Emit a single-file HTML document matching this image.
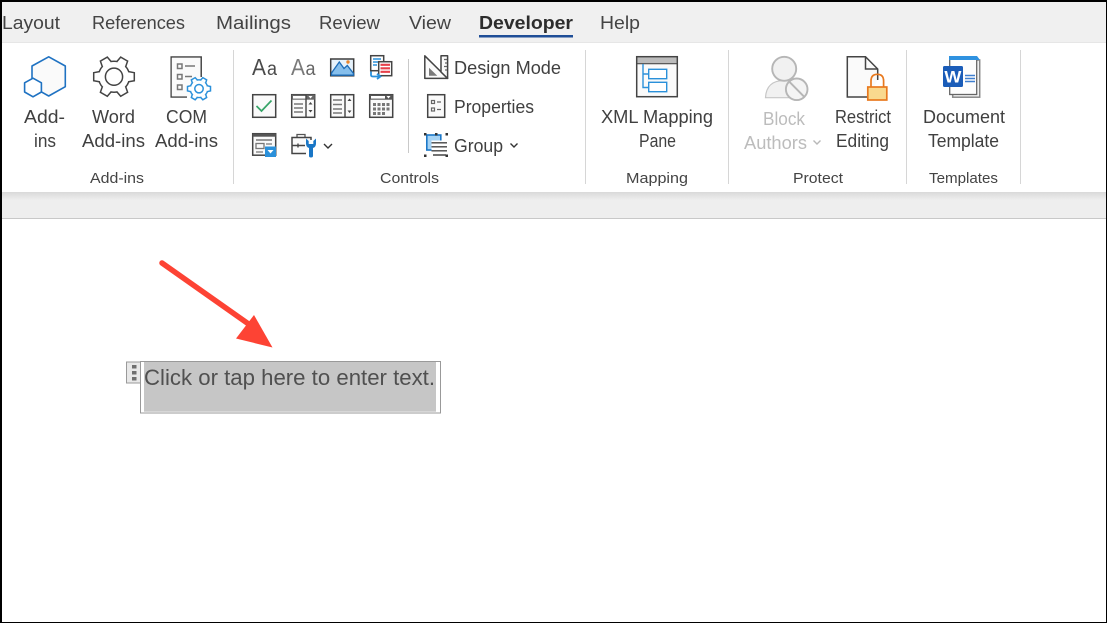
<!DOCTYPE html>
<html><head><meta charset="utf-8"><style>
html,body{margin:0;padding:0;background:#fff;width:1107px;height:623px;overflow:hidden}
svg{display:block}
text{font-family:"Liberation Sans",sans-serif;fill:#3a3a3a}
.t{font-size:18px;fill:#444}
.l{font-size:18px;fill:#404040}
.g{font-size:15px;fill:#444}
.d{fill:#bcbcbc}
</style></head><body>
<svg width="1107" height="623" viewBox="0 0 1107 623" xmlns="http://www.w3.org/2000/svg">
<defs><linearGradient id="sh" x1="0" y1="0" x2="0" y2="1"><stop offset="0" stop-color="#d9d9d9"/><stop offset="1" stop-color="#eeeeee"/></linearGradient></defs>
<rect width="1107" height="623" fill="#fff"/>
<rect y="0" width="1107" height="43" fill="#f0f0f0"/>
<rect y="42" width="1107" height="1" fill="#e6e6e6"/>
<rect y="192" width="1107" height="8" fill="url(#sh)"/>
<rect y="200" width="1107" height="18" fill="#eeeeee"/>
<rect y="218" width="1107" height="1" fill="#c8c8c8"/>

<!-- tabs -->
<g class="tabs">
<text class="t" x="2" y="29" textLength="58" lengthAdjust="spacingAndGlyphs">Layout</text>
<text class="t" x="92" y="29" textLength="93" lengthAdjust="spacingAndGlyphs">References</text>
<text class="t" x="216" y="29" textLength="75" lengthAdjust="spacingAndGlyphs">Mailings</text>
<text class="t" x="319" y="29" textLength="61" lengthAdjust="spacingAndGlyphs">Review</text>
<text class="t" x="409" y="29" textLength="42" lengthAdjust="spacingAndGlyphs">View</text>
<text class="t" x="479" y="29" textLength="94" lengthAdjust="spacingAndGlyphs" style="font-weight:bold;fill:#2d2d2d">Developer</text>
<text class="t" x="600" y="29" textLength="40" lengthAdjust="spacingAndGlyphs">Help</text>
</g>
<rect x="479" y="35" width="94" height="2.5" fill="#1f4e97"/>

<!-- separators -->
<g fill="#d6d6d6">
<rect x="233" y="50" width="1" height="134"/>
<rect x="585" y="50" width="1" height="134"/>
<rect x="728" y="50" width="1" height="134"/>
<rect x="906" y="50" width="1" height="134"/>
<rect x="1020" y="50" width="1" height="134"/>
<rect x="408" y="59" width="1" height="94" fill="#c9c9c9"/>
</g>

<!-- Add-ins icon -->
<path d="M48.7 56.8 65.3 66V86.7L48.7 96 41 91.7V83L33 78.5 32 79V66Z" fill="#fafafa" stroke="#1f72c2" stroke-width="1.6" stroke-linejoin="round"/>
<path d="M33 78.2 41.4 82.8V92L33 96.8 24.6 92V82.8Z" fill="#fff" stroke="#1f72c2" stroke-width="1.6" stroke-linejoin="round"/>

<!-- Word add-ins gear -->
<g transform="translate(114 76.7)" fill="#fff" stroke="#444" stroke-width="1.5">
<circle r="15.5"/>
<path d="M-5.2 -14 -4 -20.3H4L5.2 -14" transform="rotate(30)"/>
<path d="M-5.2 -14 -4 -20.3H4L5.2 -14" transform="rotate(90)"/>
<path d="M-5.2 -14 -4 -20.3H4L5.2 -14" transform="rotate(150)"/>
<path d="M-5.2 -14 -4 -20.3H4L5.2 -14" transform="rotate(210)"/>
<path d="M-5.2 -14 -4 -20.3H4L5.2 -14" transform="rotate(270)"/>
<path d="M-5.2 -14 -4 -20.3H4L5.2 -14" transform="rotate(330)"/>
<circle r="14.6" stroke="none"/>
<circle r="8.6"/>
</g>

<!-- COM add-ins -->
<path d="M187 97H171.2V57H201.2V77" fill="#fafafa" stroke="#444" stroke-width="1.5"/>
<rect x="171.8" y="57.8" width="28.6" height="38.5" fill="#fafafa"/>
<g fill="none" stroke="#777" stroke-width="1.5">
<rect x="177.5" y="64" width="4.5" height="4.5"/><rect x="177.5" y="74.5" width="4.5" height="4.5"/><rect x="177.5" y="85" width="4.5" height="4.5"/>
<path d="M185 66H195M185 76.5H192"/>
</g>
<g transform="translate(199 88.7)" fill="#fff" stroke="#2a90da" stroke-width="1.5">
<circle r="8.8"/>
<path d="M-3 -8 -2.2 -11.5H2.2L3 -8" transform="rotate(30)"/>
<path d="M-3 -8 -2.2 -11.5H2.2L3 -8" transform="rotate(90)"/>
<path d="M-3 -8 -2.2 -11.5H2.2L3 -8" transform="rotate(150)"/>
<path d="M-3 -8 -2.2 -11.5H2.2L3 -8" transform="rotate(210)"/>
<path d="M-3 -8 -2.2 -11.5H2.2L3 -8" transform="rotate(270)"/>
<path d="M-3 -8 -2.2 -11.5H2.2L3 -8" transform="rotate(330)"/>
<circle r="8" stroke="none"/>
<circle r="4.2"/>
</g>

<!-- Add-ins labels -->
<text class="l" x="24" y="123" textLength="41" lengthAdjust="spacingAndGlyphs">Add-</text>
<text class="l" x="34" y="147" textLength="22" lengthAdjust="spacingAndGlyphs">ins</text>
<text class="l" x="92" y="123" textLength="43" lengthAdjust="spacingAndGlyphs">Word</text>
<text class="l" x="82" y="147" textLength="63" lengthAdjust="spacingAndGlyphs">Add-ins</text>
<text class="l" x="166" y="123" textLength="41" lengthAdjust="spacingAndGlyphs">COM</text>
<text class="l" x="155" y="147" textLength="63" lengthAdjust="spacingAndGlyphs">Add-ins</text>
<text class="g" x="90" y="183" textLength="54" lengthAdjust="spacingAndGlyphs">Add-ins</text>

<!-- Controls row 1 -->
<text x="252" y="75" style="font-size:23px;fill:#4a4a4a" textLength="14" lengthAdjust="spacingAndGlyphs">A</text>
<text x="267" y="75" style="font-size:19px;fill:#4a4a4a" textLength="10" lengthAdjust="spacingAndGlyphs">a</text>
<text x="291" y="75" style="font-size:23px;fill:#7a7a7a" textLength="14" lengthAdjust="spacingAndGlyphs">A</text>
<text x="305.5" y="75" style="font-size:19px;fill:#666" textLength="10" lengthAdjust="spacingAndGlyphs">a</text>
<rect x="330.7" y="59" width="23" height="16.8" fill="#e6f2fb" stroke="#3d3d3d" stroke-width="1.5"/>
<path d="M331.5 73 339.3 62 344 68.5 347.3 65.5 353.5 73.5V75.2H331.5Z" fill="#86bfec" stroke="#1c6cb8" stroke-width="1.3"/>
<circle cx="348" cy="62" r="1.7" fill="#e8862e"/>
<!-- copy icon -->
<rect x="370.7" y="55.7" width="13" height="15" fill="#fff" stroke="#444" stroke-width="1.5"/>
<path d="M373 59H381M373 62H379M373 65H377" stroke="#2a90da" stroke-width="1.6"/>
<rect x="378.7" y="61.7" width="13" height="14" fill="#fff" stroke="#444" stroke-width="1.5"/>
<path d="M380.5 64.8H390M380.5 68.3H390M380.5 71.8H390" stroke="#e8404a" stroke-width="2.2"/>
<path d="M371 71.5V75Q371 76.5 373 76.5H380M377 73.8 380.5 76.5 377 79" fill="none" stroke="#2a90da" stroke-width="1.8"/>

<!-- row 2 -->
<rect x="252.7" y="94.7" width="23" height="22.6" fill="#fafafa" stroke="#444" stroke-width="1.5"/>
<path d="M256.5 106 261.5 111 271.5 100.5" fill="none" stroke="#36a468" stroke-width="1.7"/>

<rect x="291.7" y="94.7" width="23" height="22.6" fill="#fafafa" stroke="#444" stroke-width="1.5"/>
<rect x="291.7" y="94.7" width="23" height="5" fill="#666" /><rect x="293" y="96" width="13" height="2.6" fill="#fff"/>
<path d="M306 95V117" stroke="#444" stroke-width="1.4"/>
<path d="M294 104H303M294 108H303M294 112H303" stroke="#777" stroke-width="1.4"/>
<path d="M308.5 96 310.5 98.5 312.5 96Z" fill="#fff"/>
<path d="M308.5 104.5 310.5 102 312.5 104.5ZM308.5 110 310.5 112.5 312.5 110Z" fill="#444"/>

<rect x="330.7" y="94.7" width="23" height="22.6" fill="#fafafa" stroke="#444" stroke-width="1.5"/>
<path d="M345 95V117" stroke="#444" stroke-width="1.4"/>
<path d="M333 100H342M333 104.5H342M333 109H342M333 113H342" stroke="#777" stroke-width="1.4"/>
<path d="M347.5 101 349.5 98.5 351.5 101ZM347.5 110.5 349.5 113 351.5 110.5Z" fill="#444"/>

<rect x="369.7" y="94.7" width="23" height="22.6" fill="#fafafa" stroke="#444" stroke-width="1.5"/>
<rect x="369.7" y="94.7" width="23" height="5" fill="#555"/><rect x="371" y="96" width="14" height="2.6" fill="#fff"/>
<path d="M386.5 96 388.5 98.5 390.5 96Z" fill="#fff"/>
<g fill="#777"><rect x="373" y="103" width="3" height="3"/><rect x="377.5" y="103" width="3" height="3"/><rect x="382" y="103" width="3" height="3"/><rect x="386.5" y="103" width="3" height="3"/>
<rect x="373" y="107.5" width="3" height="3"/><rect x="377.5" y="107.5" width="3" height="3"/><rect x="382" y="107.5" width="3" height="3"/><rect x="386.5" y="107.5" width="3" height="3"/>
<rect x="373" y="112" width="3" height="3"/><rect x="377.5" y="112" width="3" height="3"/><rect x="382" y="112" width="3" height="3"/></g>

<!-- row 3 -->
<rect x="252.7" y="133.7" width="23" height="21.5" fill="#fafafa" stroke="#444" stroke-width="1.5"/>
<rect x="252.7" y="133.7" width="23" height="3" fill="#555"/>
<path d="M256 140H272" stroke="#777" stroke-width="1.5"/>
<rect x="256" y="143.5" width="8" height="5" fill="none" stroke="#777" stroke-width="1.3"/>
<path d="M256 152H263M266 144H272" stroke="#777" stroke-width="1.3"/>
<rect x="265" y="146.5" width="11" height="10.5" fill="#2a90da"/>
<path d="M267.5 150H273.5L270.5 153.5Z" fill="#fff"/>

<path d="M297 137V134.5H305V137" fill="none" stroke="#555" stroke-width="1.3"/>
<path d="M306 153.5H292V137.5H311V140" fill="#fafafa" stroke="#444" stroke-width="1.5"/>
<path d="M292 145.5H305M298 143.5V147.5" stroke="#444" stroke-width="1.4"/>
<path d="M306 138.5V143.5Q306 147 309 148V156Q309 157.5 311 157.5 313 157.5 313 156V148Q316 147 316 143.5V138.5L313.3 141V144H308.7V141Z" fill="#1976c6"/>
<path d="M324 144 328 148 332 144" fill="none" stroke="#333" stroke-width="1.4"/>

<!-- Design mode -->
<path d="M424.8 55.8 447.6 78.4H424.8Z" fill="#fafafa" stroke="#444" stroke-width="1.5" stroke-linejoin="round"/>
<path d="M429 67.8 437.3 75.7H429Z" fill="#7a7a7a"/>
<path d="M441 55.8H447.6V78.4L441 72Z" fill="#fafafa" stroke="#444" stroke-width="1.5" stroke-linejoin="round"/>
<path d="M444 59.5H447M445 63H447M444 66.5H447M445 70H447" stroke="#666" stroke-width="1.2"/>

<text class="l" x="454" y="74" textLength="107" lengthAdjust="spacingAndGlyphs">Design Mode</text>

<!-- Properties -->
<rect x="427.7" y="94.7" width="17" height="22.6" fill="#fafafa" stroke="#444" stroke-width="1.5"/>
<g fill="none" stroke="#666" stroke-width="1.2"><rect x="431.5" y="100.5" width="3" height="3"/><rect x="431.5" y="108" width="3" height="3"/><path d="M437 102H441M437 109.5H441"/></g>
<text class="l" x="454" y="113" textLength="80" lengthAdjust="spacingAndGlyphs">Properties</text>

<!-- Group -->
<rect x="426.8" y="135" width="14" height="15" fill="#a6d3f4" stroke="#1c78c8" stroke-width="1.6"/>
<rect x="431.5" y="140.5" width="15.5" height="15" fill="#fff"/>
<path d="M431.5 142.8H447M431.5 146.8H447M431.5 150.8H447M433 155H446" stroke="#444" stroke-width="1.4"/>
<g fill="#333"><rect x="424" y="133" width="2.5" height="2.5"/><rect x="435" y="133" width="2.5" height="2.5"/><rect x="445.5" y="133" width="2.5" height="2.5"/><rect x="424" y="154.5" width="2.5" height="2.5"/><rect x="445.5" y="154.5" width="2.5" height="2.5"/></g>
<text class="l" x="454" y="152" textLength="49" lengthAdjust="spacingAndGlyphs">Group</text>
<path d="M510.5 143.5 514 147 517.5 143.5" fill="none" stroke="#333" stroke-width="1.4"/>
<text class="g" x="380" y="183" textLength="59" lengthAdjust="spacingAndGlyphs">Controls</text>

<!-- XML -->
<rect x="636.7" y="56.7" width="40.6" height="40" fill="#fafafa" stroke="#444" stroke-width="1.5"/>
<rect x="637.5" y="57.5" width="39" height="5.5" fill="#bcbcbc"/>
<path d="M636.7 63.7H677" stroke="#444" stroke-width="1.2"/>
<path d="M643 64V87.5H648M643 74H648" fill="none" stroke="#2a90da" stroke-width="1.4"/>
<rect x="648.7" y="69.3" width="18" height="9.4" fill="#fff" stroke="#2a90da" stroke-width="1.4"/>
<rect x="648.7" y="82.3" width="18" height="9.4" fill="#fff" stroke="#2a90da" stroke-width="1.4"/>
<text class="l" x="601" y="123" textLength="112" lengthAdjust="spacingAndGlyphs">XML Mapping</text>
<text class="l" x="639" y="147" textLength="37" lengthAdjust="spacingAndGlyphs">Pane</text>
<text class="g" x="626" y="183" textLength="62" lengthAdjust="spacingAndGlyphs">Mapping</text>

<!-- Block authors -->
<path d="M765.5 97.7C766 86 773 80.5 784 80.5 795 80.5 801 86 802 97.7Z" fill="#f1f1f1" stroke="#c6c6c6" stroke-width="1.2"/>
<circle cx="784.2" cy="68.8" r="12" fill="#f1f1f1" stroke="#b6b6b6" stroke-width="1.9"/>
<circle cx="796.7" cy="89.3" r="10.8" fill="#f4f4f4" stroke="#b6b6b6" stroke-width="1.9"/>
<path d="M789.3 81.7 804.2 96.8" stroke="#b6b6b6" stroke-width="1.9"/>
<text class="l d" x="763" y="125" textLength="42" lengthAdjust="spacingAndGlyphs">Block</text>
<text class="l d" x="744" y="149" textLength="63" lengthAdjust="spacingAndGlyphs">Authors</text>
<path d="M813.5 140.5 817 144 820.5 140.5" fill="none" stroke="#b8b8b8" stroke-width="1.4"/>

<!-- Restrict -->
<path d="M868 97H847.3V56.7H865.5L877.7 69V80" fill="#fafafa" stroke="#444" stroke-width="1.5"/>
<path d="M865.5 56.7V69H877.7" fill="none" stroke="#444" stroke-width="1.5"/>
<path d="M871 87V81Q871 74.3 877.3 74.3 883.6 74.3 883.6 81V87" fill="none" stroke="#e8791e" stroke-width="1.7"/>
<rect x="867.8" y="87" width="19" height="13" fill="#f9d98e" stroke="#e8791e" stroke-width="1.7"/>
<text class="l" x="835" y="123" textLength="56" lengthAdjust="spacingAndGlyphs">Restrict</text>
<text class="l" x="836" y="147" textLength="53" lengthAdjust="spacingAndGlyphs">Editing</text>
<text class="g" x="793" y="183" textLength="50" lengthAdjust="spacingAndGlyphs">Protect</text>

<!-- Template -->
<rect x="952.7" y="60" width="27" height="37.2" fill="#f6f6f6" stroke="#888" stroke-width="1.5"/>
<rect x="949.7" y="57.5" width="27" height="37" fill="#fdfdfd" stroke="#666" stroke-width="1.3"/>
<path d="M949 56H977L980 60H949Z" fill="#2f92e0"/>
<rect x="943" y="66" width="20" height="21" rx="1.5" fill="#1a5cb8"/>
<text x="944.4" y="82.3" style="font-size:17px;font-weight:bold;fill:#fff" textLength="17" lengthAdjust="spacingAndGlyphs">W</text>
<path d="M965 75.5H975M965 78.5H975M965 81.5H975" stroke="#3f7fcf" stroke-width="1.6"/>
<text class="l" x="923" y="123" textLength="82" lengthAdjust="spacingAndGlyphs">Document</text>
<text class="l" x="928" y="147" textLength="71" lengthAdjust="spacingAndGlyphs">Template</text>
<text class="g" x="929" y="183" textLength="69" lengthAdjust="spacingAndGlyphs">Templates</text>

<!-- arrow -->
<path d="M162 263 250 325" stroke="#fd4334" stroke-width="5.5" stroke-linecap="round"/>
<path d="M272.5 347.5 254 315 236 338.5Z" fill="#fd4334"/>

<!-- content control -->
<rect x="126.5" y="362" width="14" height="21" fill="#e8e8e8" stroke="#9a9a9a" stroke-width="1"/>
<g fill="#707070"><rect x="132" y="365" width="4.5" height="3.5"/><rect x="132" y="371" width="4.5" height="3.5"/><rect x="132" y="377" width="4.5" height="3.5"/></g>
<rect x="140.5" y="361.5" width="300" height="51.5" fill="#fff" stroke="#999" stroke-width="1"/>
<rect x="144" y="362" width="292" height="49.7" fill="#c6c6c6"/>
<text x="144" y="385" style="font-size:22px;fill:#505050" textLength="291" lengthAdjust="spacingAndGlyphs">Click or tap here to enter text.</text>

<!-- screenshot frame -->
<rect x="0" y="0" width="1107" height="2" fill="#000"/>
<rect x="0" y="0" width="2" height="623" fill="#000"/>
<rect x="1106" y="0" width="1" height="623" fill="#000"/>
<rect x="0" y="622" width="1107" height="1" fill="#000"/>
</svg>
</body></html>
